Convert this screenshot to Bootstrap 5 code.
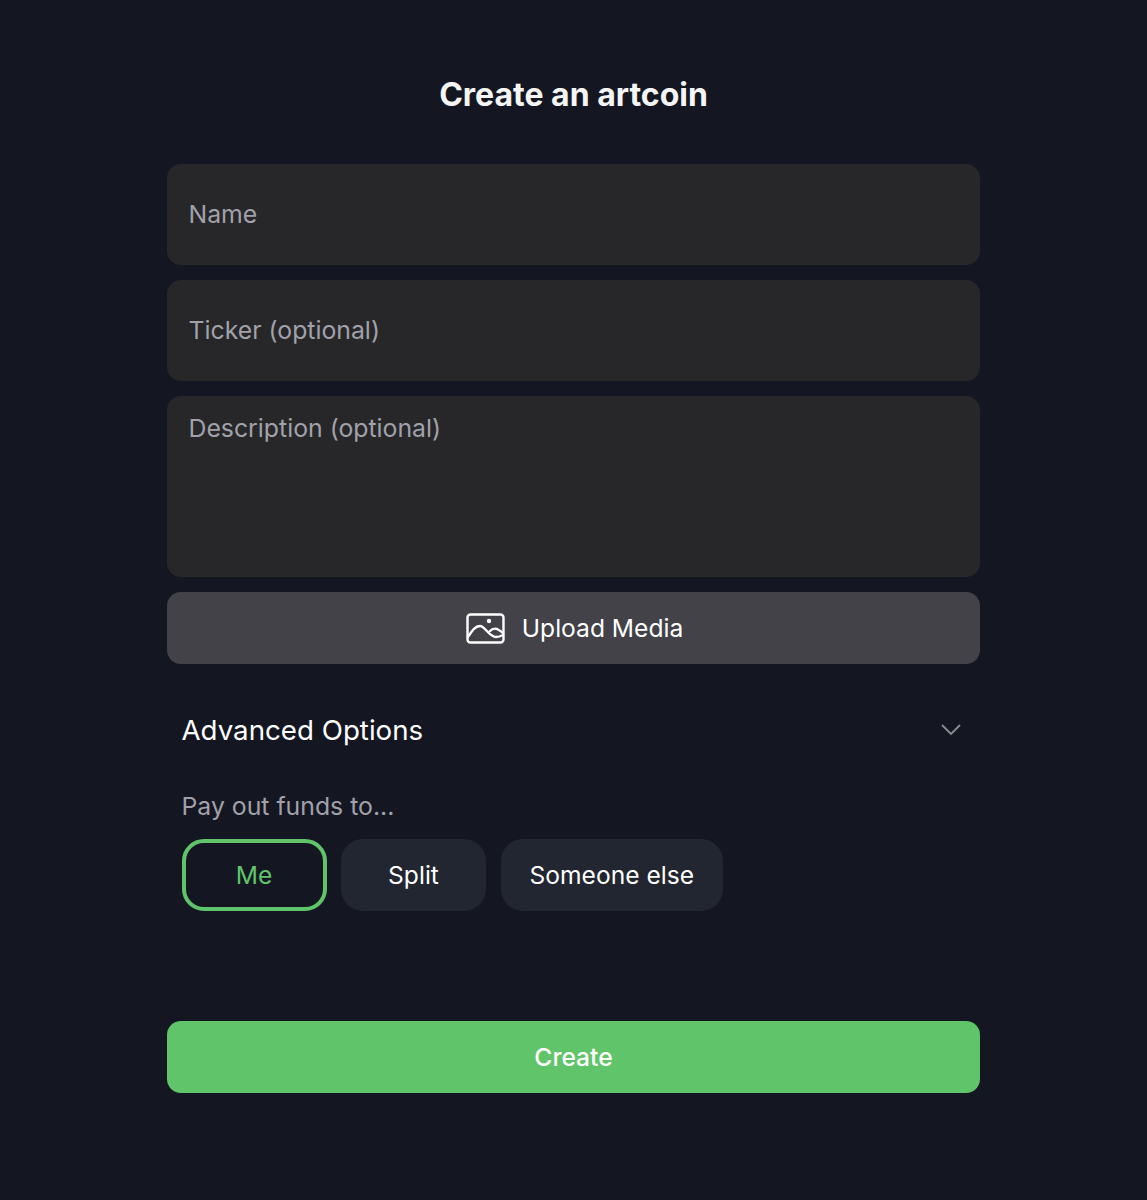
<!DOCTYPE html>
<html lang="en"><head><meta charset="utf-8">
<link href="https://cdn.jsdelivr.net/npm/bootstrap@5.3.0/dist/css/bootstrap.min.css" rel="stylesheet">
<style>
html,body{background:#141722;height:1200px;font-family:Inter,"Liberation Sans",sans-serif;}
.pane{width:813px;margin:0 auto;padding-top:73px;}
.ttl{font-size:32px;line-height:44px;font-weight:700;color:#f5f5f5;text-align:center;margin:0 0 47px;}
.fld{display:block;width:100%;background:#272729;border:0;border-radius:14px;color:#fff;font-size:24.8px;padding:0 21.5px 2px;height:101px;margin-bottom:15px;outline:0;}
.fld::placeholder{color:#a1a1aa;opacity:1;}
textarea.fld{height:181px;padding-top:15px;line-height:34px;resize:none;}
.upl{height:72px;background:#424248;border-radius:14px;color:#fff;font-size:24.6px;gap:17px;}
.upl svg{margin-left:2px;}
.adv{padding:0 14.5px;margin-top:49px;height:36px;color:#fff;font-size:27.7px;}
.pay{padding:0 14.5px;margin-top:40px;color:#a1a1aa;font-size:24.8px;line-height:34px;}
.opts{padding:0 14.5px;margin-top:16px;gap:14.5px;}
.opt{height:72px;min-width:145px;padding:0 29px;background:#222630;border-radius:22px;color:#fff;font-size:24.6px;}
.opt.on{background:transparent;border:4px solid #5fc46a;color:#5fc46a;}
.go{height:72px;margin-top:110px;background:#5fc46a;border-radius:14px;color:#fff;font-size:24.6px;font-weight:500;}
.opt span,.go span{position:relative;top:.5px;}
</style></head><body>
<div class="pane">
<h1 class="ttl">Create an artcoin</h1>
<input class="fld" placeholder="Name">
<input class="fld" placeholder="Ticker (optional)">
<textarea class="fld" placeholder="Description (optional)"></textarea>
<div class="upl d-flex align-items-center justify-content-center">
<svg width="39" height="31" viewBox="0 0 39 31" fill="none" stroke="#fff" stroke-width="2.4" stroke-linejoin="round" stroke-linecap="round"><rect x="1.5" y="1.5" width="36" height="28" rx="3"/><path d="M2 24C6 18 9 13 14 13C19 13 23 24 30 24C33 24 35 23 37 22M24 18C26 16 28 15 31 16C33 17 35 18 37 20"/><circle cx="23" cy="8" r="1" fill="#fff"/></svg>
<span>Upload Media</span></div>
<div class="adv d-flex align-items-center justify-content-between"><span>Advanced Options</span>
<svg width="22" height="14" viewBox="0 0 22 14" fill="none" stroke="#8b8d94" stroke-width="1.8" class="me-1"><path d="M2 1 L11 10 L20 1"/></svg></div>
<div class="pay">Pay out funds to...</div>
<div class="opts d-flex">
<div class="opt on d-flex align-items-center justify-content-center"><span>Me</span></div>
<div class="opt d-flex align-items-center justify-content-center"><span>Split</span></div>
<div class="opt d-flex align-items-center justify-content-center"><span>Someone else</span></div>
</div>
<div class="go d-flex align-items-center justify-content-center"><span>Create</span></div>
</div>
<script src="https://cdn.jsdelivr.net/npm/bootstrap@5.3.0/dist/js/bootstrap.bundle.min.js"></script>
</body></html>
